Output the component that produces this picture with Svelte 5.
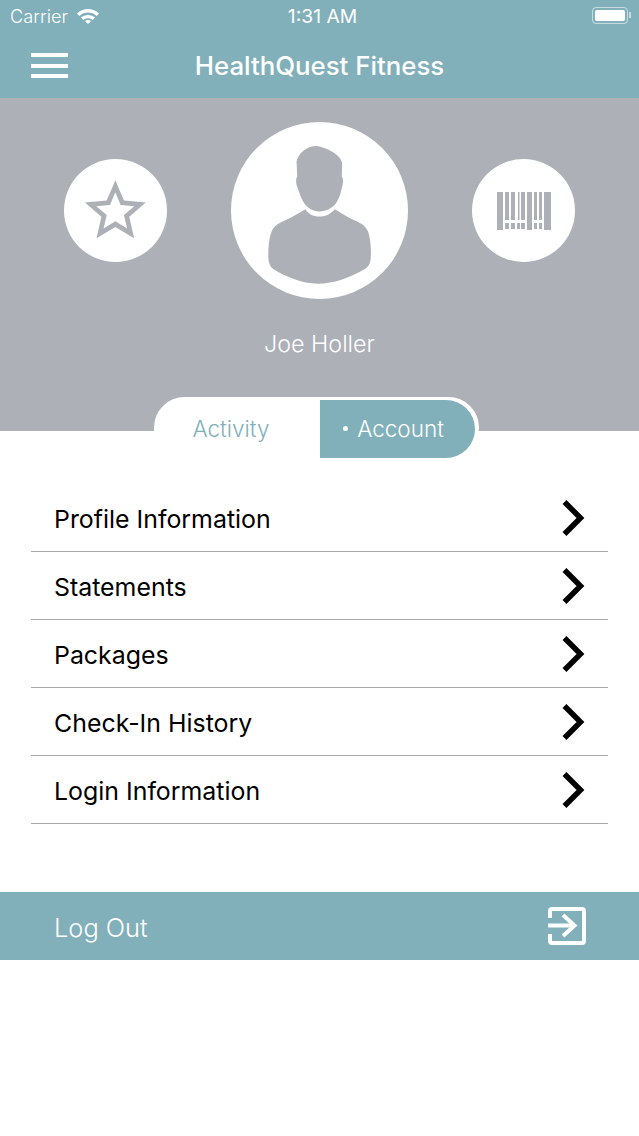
<script lang="ts">
  const rows = ["Profile Information", "Statements", "Packages", "Check-In History", "Login Information"];

  function starPoints(R: number, r: number) {
    const pts = [];
    for (let i = 0; i < 10; i++) {
      const rad = i % 2 ? r : R;
      const a = ((-90 + 36 * i) * Math.PI) / 180;
      pts.push(`${(226 + rad * Math.cos(a)).toFixed(1)} ${(308 + rad * Math.sin(a)).toFixed(1)}`);
    }
    return "M" + pts.join("L") + "Z";
  }

  // x, width, height of each barcode bar
  const bars = [
    [0, 6, 38], [8, 4, 28], [14, 4, 28], [21, 1.5, 28], [24, 4, 28],
    [30, 5, 38], [37, 3, 28], [42, 3, 28], [47, 7, 38],
  ];
  // x, width of the short blocks under the bars
  const blocks = [[8, 4], [14, 4], [20, 3], [24, 4], [37, 3], [42, 3]];
</script>

<div class="top">
  <div class="status">
    <span class="carrier">Carrier</span>
    <svg class="wifi" width="22" height="16" viewBox="0 0 22 16">
      <path d="M0 5.500C6 -.5 16 -.5 22 5.500l-2.300 2.400C14.500 3.300 7.500 3.300 2.300 7.900z" />
      <path d="M4 9.500c4-3.500 10-3.500 14 0l-2.300 2.400c-2.800-2.300-6.600-2.300-9.400 0z" />
      <path d="M8 13c1.800-1.300 4.200-1.300 6 0L11 16z" />
    </svg>
    <span class="time">1:31 AM</span>
    <span class="battery"><span class="charge"></span></span>
  </div>
  <div class="nav">
    <div class="burger"><span></span><span></span><span></span></div>
    <h1>HealthQuest Fitness</h1>
  </div>
</div>

<div class="profile">
  <div class="avatars">
    <div class="circle small">
      <svg width="103" height="103" viewBox="72 148 309 309">
        <path fill-rule="evenodd" d={starPoints(96, 44) + starPoints(60, 27)} />
      </svg>
    </div>
    <div class="circle big">
      <svg width="177" height="177" viewBox="573 36 532 532">
        <path d="M830 108C860 112 905 135 907 160L906 200C912 208 910 225 905 238C899 268 885 303 838 305C798 303 784 268 775 238C769 225 766 208 772 200L770 155C775 130 800 108 830 108Z" />
        <path d="M797 298C805 312 820 320 838 320C860 320 875 310 885 298L925 322C950 335 975 340 985 365C992 385 995 420 993 445C992 460 988 470 975 478C930 505 880 522 835 522C785 522 735 500 700 478C690 470 686 460 685 440C685 410 687 385 695 365C705 340 730 335 755 322Z" />
      </svg>
    </div>
    <div class="circle small">
      <svg width="54" height="38" viewBox="0 0 54 38">
        {#each bars as [x, w, h]}
          <rect {x} y="0" width={w} height={h} />
        {/each}
        {#each blocks as [x, w]}
          <rect {x} y="31" width={w} height="6" />
        {/each}
      </svg>
    </div>
  </div>
  <div class="name">Joe Holler</div>
</div>

<div class="tabs">
  <div class="tab first">Activity</div>
  <div class="tab active"><span class="dot"></span>Account</div>
</div>

<div class="list">
  {#each rows as row}
    <div class="row">
      <span>{row}</span>
      <svg width="24" height="38" viewBox="0 0 24 38" fill="none" stroke="#000" stroke-width="5.500">
        <path d="M3.500 3L19.500 19L3.500 35" />
      </svg>
    </div>
  {/each}
</div>

<div class="logout">
  <span>Log Out</span>
  <svg width="38" height="38" viewBox="0 0 38 38" fill="none" stroke="#fff" stroke-width="4">
    <path d="M2 11V4a2 2 0 0 1 2-2h30a2 2 0 0 1 2 2v30a2 2 0 0 1-2 2H4a2 2 0 0 1-2-2v-7" />
    <path d="M0 18.500H26" />
    <path d="M15 8L26.500 18.500L15 29" />
  </svg>
</div>

<style>
  :global(body) {
    background: #fff;
    font-family: Inter, "Liberation Sans", sans-serif;
  }

  .top {
    height: 98px;
    background: #81b0ba;
    color: #fff;
  }

  .status {
    position: relative;
    box-sizing: border-box;
    display: flex;
    align-items: center;
    height: 33px;
    padding: 0 11px 2px 10px;
    font-size: 18.200px;
    font-weight: 300;
  }

  .wifi {
    margin-left: 9px;
    fill: #fff;
  }

  .time {
    position: absolute;
    left: 6px;
    right: 0;
    text-align: center;
    font-size: 19.300px;
    font-weight: 400;
  }

  .battery {
    position: relative;
    margin-left: auto;
    box-sizing: border-box;
    width: 36px;
    height: 17px;
    padding: 2px;
    border: 1.5px solid rgba(255, 255, 255, 0.55);
    border-radius: 4px;
    display: flex;
  }

  .battery::after {
    content: "";
    position: absolute;
    right: -4px;
    top: 4px;
    width: 2px;
    height: 6px;
    background: rgba(255, 255, 255, 0.55);
  }

  .charge {
    flex: 1;
    background: #fff;
    border-radius: 2px;
  }

  .nav {
    position: relative;
    display: flex;
    align-items: center;
    height: 65px;
    padding-left: 31px;
  }

  .burger {
    display: flex;
    flex-direction: column;
    gap: 6.500px;
    width: 37px;
  }

  .burger span {
    height: 4px;
    background: #fff;
  }

  h1 {
    position: absolute;
    left: 0;
    right: 0;
    margin: 0 0 1px;
    text-align: center;
    font-size: 25.800px;
    font-weight: 500;
  }

  .profile {
    box-sizing: border-box;
    height: 333px;
    padding-top: 24px;
    background: #adb0b7;
  }

  .avatars {
    display: flex;
    justify-content: center;
    align-items: center;
    gap: 64px;
  }

  .circle {
    display: flex;
    align-items: center;
    justify-content: center;
    border-radius: 50%;
    background: #fff;
  }

  .circle svg {
    fill: #adb0b7;
    display: block;
  }

  .small {
    width: 103px;
    height: 103px;
  }

  .big {
    width: 177px;
    height: 177px;
  }

  .name {
    margin-top: 30px;
    text-align: center;
    color: #fff;
    font-size: 23.300px;
    font-weight: 300;
  }

  .tabs {
    box-sizing: border-box;
    display: flex;
    width: 325px;
    height: 61px;
    margin: -34px 0 0 154px;
    padding: 3px 4px 0 0;
    background: #fff;
    border-radius: 32px 32px 32px 0;
    position: relative;
  }

  .tab {
    display: flex;
    align-items: center;
    justify-content: center;
    flex: 1;
    padding-bottom: 1px;
    color: #81b0ba;
    font-size: 22.500px;
    font-weight: 300;
  }

  .first {
    padding-right: 12px;
  }

  .active {
    flex: 0 0 155px;
    padding-right: 8px;
    box-sizing: border-box;
    background: #81b0ba;
    color: #fff;
    border-radius: 0 29px 29px 0;
  }

  .dot {
    width: 5px;
    height: 5px;
    margin-right: 9px;
    border-radius: 50%;
    background: #fff;
  }

  .list {
    margin: 26px 31px 0;
  }

  .row {
    box-sizing: border-box;
    display: flex;
    align-items: center;
    justify-content: space-between;
    height: 68px;
    padding: 0 23px 0 23px;
    border-bottom: 1px solid #a9a6b2;
    font-size: 24.900px;
    color: #000;
  }

  .row span {
    padding-top: 2px;
  }

  .row svg {
    margin-top: 1px;
  }

  .logout {
    display: flex;
    align-items: center;
    justify-content: space-between;
    height: 68px;
    margin-top: 68px;
    padding: 0 53px 0 54px;
    background: #81b0ba;
    color: #fff;
    font-size: 25.400px;
    font-weight: 300;
  }

  .logout span {
    padding-top: 2px;
  }
</style>
